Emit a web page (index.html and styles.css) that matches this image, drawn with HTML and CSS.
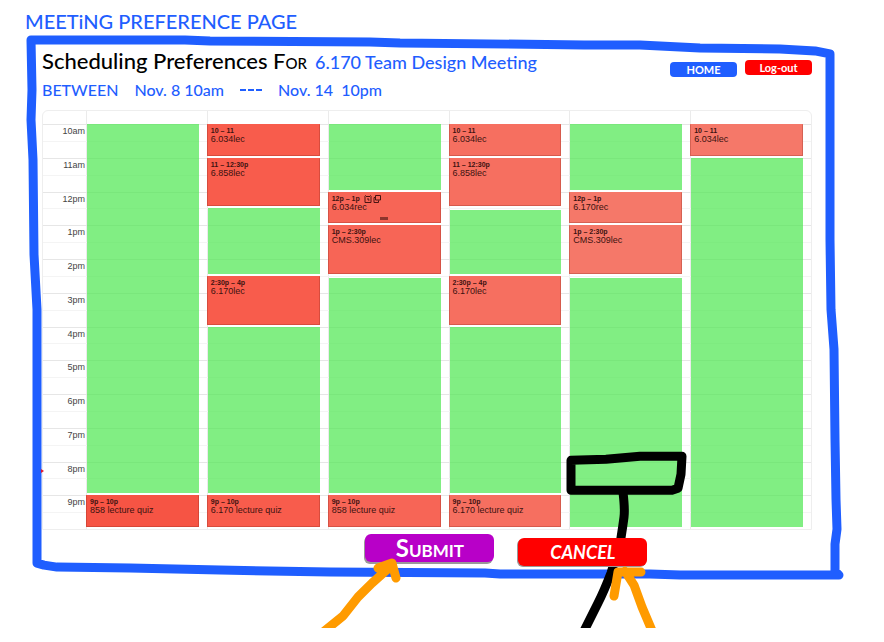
FILE: index.html
```html
<!DOCTYPE html>
<html lang="en">
<head>
<meta charset="utf-8">
<title>Meeting Preference Page</title>
<link rel="stylesheet" href="styles.css">
</head>
<body>
<main class="page">
  <svg class="layer frame" viewBox="0 0 884 629" preserveAspectRatio="none" aria-hidden="true">
    <path d="M31 40H185L210 41L370 42L400 43L584 45L640 45L700 48L780 49L815 51L830 54V240L831 310L834 350L835 440L836 500L837 530L835 545V572L839 576H680L650 575H500L485 574L330 573L220 571L130 569L57 568L44 566L37 564V310L34 255L33 160L31 120L32 90L31 40Z"/>
  </svg>
  <svg class="layer note" viewBox="0 0 884 629" preserveAspectRatio="none" aria-hidden="true">
    <path d="M571 461L606 460L640 457L682 457L681 475L678 489L672 491H571Z"/>
    <path d="M623 493Q625 510 624 518T620 545L611 574Q604 592 598 604L583 634"/>
  </svg>

  <h1 class="page-title">MEETiNG PREFERENCE PAGE</h1>

  <section class="panel">
    <header class="panel-head">
      <div>
        <h2 class="line"><span class="lead">Scheduling Preferences <span class="caps">For</span></span><span class="meeting">6.170 Team Design Meeting</span></h2>
        <p class="line range"><span class="between">Between</span><span>Nov. 8 10am</span><i class="dash"></i><span>Nov. 14 &nbsp;10pm</span></p>
      </div>
      <nav class="nav">
        <button class="chip home" type="button">Home</button>
        <button class="chip logout" type="button">Log-out</button>
      </nav>
    </header>

    <div class="calendar">
      <div class="day" style="--day:1"></div>
      <div class="day" style="--day:2"></div>
      <div class="day" style="--day:3"></div>
      <div class="day" style="--day:4"></div>
      <div class="day" style="--day:5"></div>
      <div class="day" style="--day:6"></div>

      <div class="hour" style="--at:0"><span>10am</span></div>
      <div class="hour" style="--at:2"><span>11am</span></div>
      <div class="hour" style="--at:4"><span>12pm</span></div>
      <div class="hour" style="--at:6"><span>1pm</span></div>
      <div class="hour" style="--at:8"><span>2pm</span></div>
      <div class="hour" style="--at:10"><span>3pm</span></div>
      <div class="hour" style="--at:12"><span>4pm</span></div>
      <div class="hour" style="--at:14"><span>5pm</span></div>
      <div class="hour" style="--at:16"><span>6pm</span></div>
      <div class="hour" style="--at:18"><span>7pm</span></div>
      <div class="hour" style="--at:20"><span class="now">8pm</span></div>
      <div class="hour" style="--at:22"><span>9pm</span></div>

      <div class="free" style="--day:1;--at:0;--len:22"></div>
      <div class="free" style="--day:2;--at:5;--len:4"></div>
      <div class="free" style="--day:2;--at:12;--len:10"></div>
      <div class="free" style="--day:3;--at:0;--len:4"></div>
      <div class="free after" style="--day:3;--at:9;--len:13"></div>
      <div class="free after" style="--day:4;--at:5;--len:4"></div>
      <div class="free" style="--day:4;--at:12;--len:10"></div>
      <div class="free" style="--day:5;--at:0;--len:4"></div>
      <div class="free after" style="--day:5;--at:9;--len:15"></div>
      <div class="free" style="--day:6;--at:2;--len:22"></div>

      <article class="busy shade-1" style="--day:1;--at:22;--len:2"><b>9p – 10p</b>858 lecture quiz</article>

      <article class="busy shade-2" style="--day:2;--at:0;--len:2"><b>10 – 11</b>6.034lec</article>
      <article class="busy shade-2" style="--day:2;--at:2;--len:3"><b>11 – 12:30p</b>6.858lec</article>
      <article class="busy shade-2" style="--day:2;--at:9;--len:3"><b>2:30p – 4p</b>6.170lec</article>
      <article class="busy shade-2" style="--day:2;--at:22;--len:2"><b>9p – 10p</b>6.170 lecture quiz</article>

      <article class="busy shade-3" style="--day:3;--at:4;--len:2"><b>12p – 1p
        <svg class="marks" viewBox="0 0 17 8" aria-hidden="true"><path d="M1 2V7.500H7V2M.5 1.500L2 .5M7.500 1.500L6 .5M2 1.500H6M4 3V5H5.500M11.500 .5H16.500V5H11.500ZM11 2.500H10V7.500H14.500V5.500"/></svg></b>6.034rec<i class="grip"></i></article>
      <article class="busy shade-3" style="--day:3;--at:6;--len:3"><b>1p – 2:30p</b>CMS.309lec</article>
      <article class="busy shade-3" style="--day:3;--at:22;--len:2"><b>9p – 10p</b>858 lecture quiz</article>

      <article class="busy shade-4" style="--day:4;--at:0;--len:2"><b>10 – 11</b>6.034lec</article>
      <article class="busy shade-4" style="--day:4;--at:2;--len:3"><b>11 – 12:30p</b>6.858lec</article>
      <article class="busy shade-4" style="--day:4;--at:9;--len:3"><b>2:30p – 4p</b>6.170lec</article>
      <article class="busy shade-4" style="--day:4;--at:22;--len:2"><b>9p – 10p</b>6.170 lecture quiz</article>

      <article class="busy shade-5" style="--day:5;--at:4;--len:2"><b>12p – 1p</b>6.170rec</article>
      <article class="busy shade-5" style="--day:5;--at:6;--len:3"><b>1p – 2:30p</b>CMS.309lec</article>

      <article class="busy shade-5" style="--day:6;--at:0;--len:2"><b>10 – 11</b>6.034lec</article>
    </div>

    <div class="actions">
      <button class="action submit" type="submit">Submit</button>
      <button class="action cancel" type="button">CANCEL</button>
    </div>
  </section>

  <svg class="layer arrows" viewBox="0 0 884 629" preserveAspectRatio="none" aria-hidden="true">
    <path d="M322 634L343 617L358 598L372 584L391 567M378 569L392 564L396 579"/>
    <path d="M614 597L618 573L641 573M625 572L634 586L642 608L653 634"/>
  </svg>
</main>
</body>
</html>
```
FILE: styles.css
```css
:root {
  --blue: #1f5eff;
  --hand: Lato, "Open Sans", sans-serif;
}

* { box-sizing: border-box; }

body {
  margin: 0;
  background: #fff;
  font-family: "Liberation Sans", Arial, sans-serif;
}

.page {
  position: relative;
  padding: 8px 0 62px;
  overflow: hidden;
}

.layer {
  position: absolute;
  inset: 0;
  width: 100%;
  height: 100%;
  fill: none;
  stroke-width: 9;
  stroke-linecap: round;
  stroke-linejoin: round;
  pointer-events: none;
}

.frame { stroke: var(--blue); }
.note { stroke: #000; z-index: 1; }
.arrows { stroke: #ff9b00; z-index: 3; }

.page-title {
  margin: 0 0 0 25px;
  color: var(--blue);
  font: 500 20px/26px var(--hand);
}

.panel { padding: 13px 72px 0 42px; }

.panel-head {
  display: flex;
  justify-content: space-between;
  font-family: var(--hand);
}

.line {
  display: flex;
  align-items: baseline;
  margin: 0;
  color: var(--blue);
  font-size: 18px;
  font-weight: 500;
  line-height: 28px;
}

.lead {
  margin-right: 8px;
  color: #000;
  font-size: 22px;
}

.caps { font-variant: small-caps; }

.between { text-transform: uppercase; }

.range {
  gap: 16px;
  font-size: 16px;
}

.dash {
  align-self: center;
  width: 22px;
  border-top: 2px dashed var(--blue);
}

.nav {
  display: flex;
  align-items: flex-start;
  gap: 8px;
  padding-top: 13px;
}

.chip {
  width: 67px;
  height: 15px;
  padding: 0;
  border: 0;
  border-radius: 4px;
  color: #fff;
  font: 700 11px/14px var(--hand);
}

.home {
  margin-top: 2px;
  background: var(--blue);
  text-transform: uppercase;
}

.logout { background: #f00; }

.calendar {
  display: grid;
  grid-template-columns: 43px repeat(6, 1fr);
  grid-template-rows: 13px repeat(24, minmax(16px, 1fr));
  min-height: 420px;
  margin-top: 6px;
  border: 1px solid #eee;
  border-radius: 6px 6px 0 0;
  font-size: 9px;
  line-height: 9px;
}

.day {
  grid-column: calc(var(--day) + 1);
  grid-row: 1 / -1;
  border-left: 1px solid #ebebeb;
}

.hour {
  grid-column: 1 / -1;
  grid-row: calc(var(--at) + 2) / span 2;
  border-top: 1px solid #e6e6e6;
  background: linear-gradient(#f4f4f4, #f4f4f4) 0 50% / 100% 1px no-repeat;
  color: #444;
}

.hour span {
  display: block;
  width: 42px;
  padding-top: 2px;
  text-align: right;
}

.now { position: relative; }

.now::before {
  content: "";
  position: absolute;
  top: 6px;
  left: -2px;
  border: 2px solid transparent;
  border-left: 3px solid #e01830;
}

.free,
.busy {
  grid-column: calc(var(--day) + 1);
  grid-row: calc(var(--at) + 2) / span var(--len);
}

.free {
  margin: 0 8px 2px 1px;
  background: rgb(75 231 78 / 70%);
}

.after { margin-top: 2px; }

.busy {
  position: relative;
  margin: 0 8px 2px 0;
  padding: 2px 3px 0;
  border: 1px solid rgb(120 30 20 / 25%);
  border-top-color: transparent;
  color: #3c1210;
}

.busy b {
  display: block;
  font-size: 7px;
  line-height: 8px;
}

.shade-1 { background-color: #f65444; }
.shade-2 { background-color: #f85c4c; }
.shade-3 { background-color: #f76556; }
.shade-4 { background-color: #f66f60; }
.shade-5 { background-color: #f57869; }

.marks {
  width: 17px;
  height: 8px;
  margin-left: 2px;
  fill: none;
  stroke: #4a1512;
  vertical-align: top;
}

.grip {
  position: absolute;
  bottom: 2px;
  left: 50%;
  width: 8px;
  height: 3px;
  margin-left: -4px;
  background: #8e352d;
}

.actions {
  display: flex;
  align-items: flex-start;
  gap: 24px;
  padding: 4px 0 0 42%;
}

.action {
  position: relative;
  z-index: 2;
  width: 129px;
  height: 28px;
  padding: 0;
  border: 0;
  border-radius: 6px;
  color: #fff;
  font: 700 18px/26px var(--hand);
}

.submit {
  background: #b800c8;
  box-shadow: -1px 2px #999;
  font-size: 24px;
  font-variant: small-caps;
}

.cancel {
  margin-top: 4px;
  background: #f00;
  box-shadow: -1px 1px #999;
  font-style: italic;
}
```
